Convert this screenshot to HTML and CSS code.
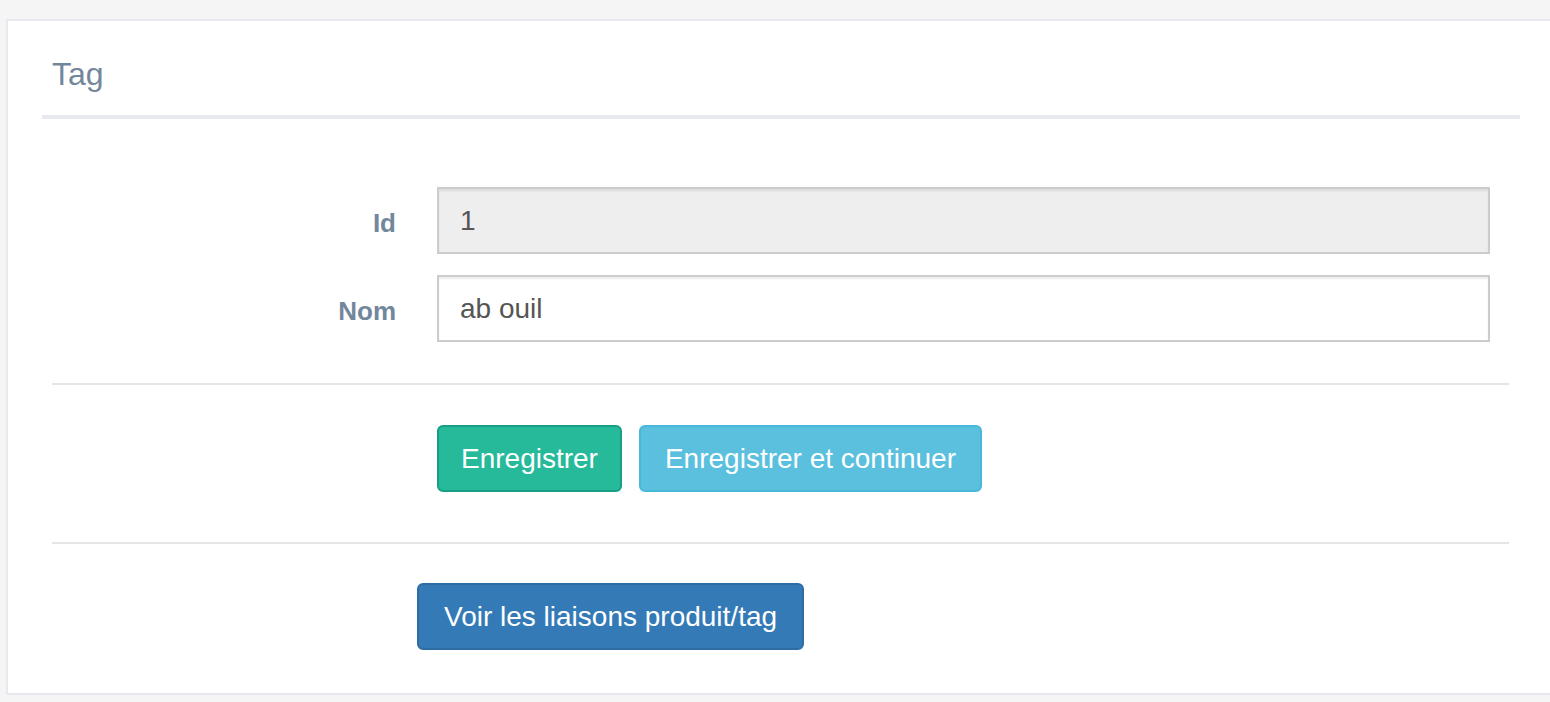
FILE: index.html
```html
<!DOCTYPE html>
<html lang="fr">
<head>
<meta charset="utf-8">
<title>Tag</title>
<link rel="stylesheet" href="styles.css">
</head>
<body>
<div class="panel">
  <div class="panel-title">
    <h2>Tag</h2>
  </div>
  <div class="panel-body">
    <form class="form">
      <div class="form-row">
        <label class="form-label">Id</label>
        <input class="form-control readonly" type="text" value="1" readonly>
      </div>
      <div class="form-row">
        <label class="form-label">Nom</label>
        <input class="form-control" type="text" value="ab ouil">
      </div>
      <div class="divider"></div>
      <div class="actions">
        <button type="button" class="btn btn-success">Enregistrer</button>
        <button type="button" class="btn btn-info">Enregistrer et continuer</button>
      </div>
      <div class="divider second"></div>
      <div class="links">
        <button type="button" class="btn btn-primary">Voir les liaisons produit/tag</button>
      </div>
    </form>
  </div>
</div>
</body>
</html>
```

FILE: styles.css
```css
html, body {
  margin: 0;
  padding: 0;
}
body {
  background: #f5f5f5;
  font-family: "Liberation Sans", Arial, sans-serif;
  color: #73879c;
  overflow: hidden;
  padding-top: 19px;
}
.panel {
  margin-left: 6px;
  margin-right: -30px;
  background: #fff;
  border: 2px solid #e6e9ed;
  padding: 0 0 43px 0;
}
.panel-title {
  margin-left: 34px;
  width: 1478px;
  border-bottom: 4px solid #e6e9ed;
  padding: 33px 0 21px 10px;
  box-sizing: border-box;
}
.panel-title h2 {
  margin: 0;
  font-size: 32px;
  line-height: 40px;
  font-weight: 400;
  color: #73879c;
}
.panel-body {
  padding: 68px 0 0 44px;
}
.form {
  width: 1457px;
}
.form-row {
  display: flex;
  align-items: flex-start;
  margin-bottom: 21px;
}
.form-row + .form-row {
  margin-bottom: 41px;
}
.form-label {
  width: 344px;
  margin-right: 41px;
  text-align: right;
  font-weight: 700;
  font-size: 26px;
  line-height: 40px;
  padding-top: 16px;
  color: #73879c;
}
.form-control {
  width: 1053px;
  height: 67px;
  box-sizing: border-box;
  border: 2px solid #ccc;
  border-radius: 0;
  padding: 0 21px;
  font-family: "Liberation Sans", Arial, sans-serif;
  font-size: 28px;
  color: #555;
  background: #fff;
  box-shadow: inset 0 2px 2px rgba(0, 0, 0, 0.075);
  outline: none;
}
.form-control.readonly {
  background: #eee;
}
.divider {
  height: 2px;
  background: #e5e5e5;
}
.actions {
  display: flex;
  gap: 17px;
  padding-left: 385px;
  margin: 40px 0 50px;
}
.links {
  padding-left: 365px;
  margin-top: 39px;
}
.btn {
  display: inline-block;
  box-sizing: border-box;
  height: 67px;
  padding: 0 24px;
  border: 2px solid transparent;
  border-radius: 6px;
  font-family: "Liberation Sans", Arial, sans-serif;
  font-size: 28px;
  line-height: 63px;
  color: #fff;
  cursor: pointer;
}
.btn-success {
  background: #26b99a;
  border-color: #169f85;
  padding: 0 22px;
}
.btn-info {
  background: #5bc0de;
  border-color: #46b8da;
}
.btn-primary {
  background: #337ab7;
  border-color: #2e6da4;
  padding: 0 25px;
}
```
